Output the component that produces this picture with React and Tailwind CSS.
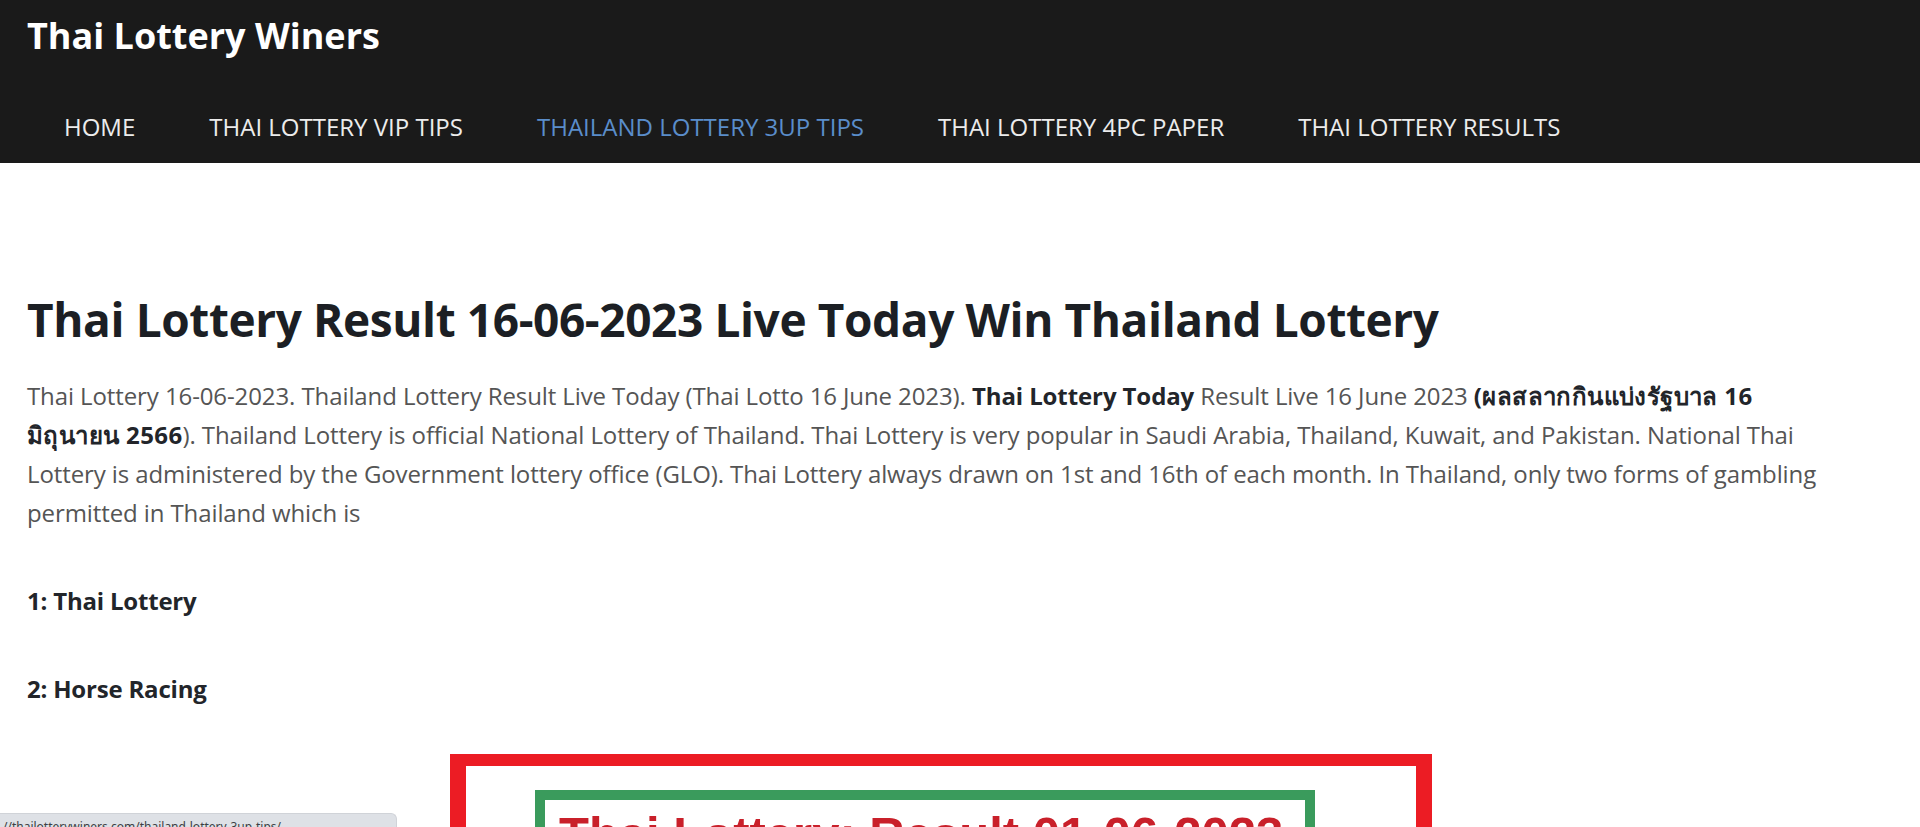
import React from "react";

const navItems = [
  { label: "HOME", active: false },
  { label: "THAI LOTTERY VIP TIPS", active: false },
  { label: "THAILAND LOTTERY 3UP TIPS", active: true },
  { label: "THAI LOTTERY 4PC PAPER", active: false },
  { label: "THAI LOTTERY RESULTS", active: false },
];

export default function App() {
  return (
    <div
      className="min-h-[827px] bg-white"
      style={{ fontFamily: '"Open Sans", "Noto Sans", sans-serif' }}
    >
      <header className="h-[163px] bg-[#1a1a1a] pl-[27px]">
        <div className="pt-[12px] text-[36px] font-bold leading-[48px] text-white">
          Thai Lottery Winers
        </div>
        <nav className="mt-[52px] flex">
          {navItems.map((item, i) => (
            <a
              key={i}
              href="#"
              className={
                "px-[37px] text-[24px] leading-[30px] " +
                (item.active ? "text-[#5a8dca]" : "text-[#ececec]")
              }
            >
              {item.label}
            </a>
          ))}
        </nav>
      </header>

      <main className="w-[1855px] pl-[27px] pt-[128px]">
        <h1 className="text-[46px] font-bold leading-[56px] tracking-[-0.4px] text-[#1c1f24]">
          Thai Lottery Result 16-06-2023 Live Today Win Thailand Lottery
        </h1>
        <p className="mt-[29px] text-[24px] leading-[39px] tracking-[-0.1px] text-[#555555]">
          <span className="block whitespace-nowrap">
            Thai Lottery 16-06-2023. Thailand Lottery Result Live Today (Thai Lotto 16 June 2023).{" "}
            <strong className="font-bold text-[#22252a]">Thai Lottery Today</strong> Result Live 16 June 2023{" "}
            <strong className="font-bold tracking-[0.4px] text-[#22252a]">(ผลสลากกินแบ่งรัฐบาล 16</strong>
          </span>
          <span className="block whitespace-nowrap">
            <strong className="font-bold tracking-[0.4px] text-[#22252a]">มิถุนายน 2566</strong>). Thailand Lottery is official National Lottery of Thailand. Thai Lottery is very popular in Saudi Arabia, Thailand, Kuwait, and Pakistan. National Thai
          </span>
          <span className="block whitespace-nowrap">
            Lottery is administered by the Government lottery office (GLO). Thai Lottery always drawn on 1st and 16th of each month. In Thailand, only two forms of gambling
          </span>
          <span className="block whitespace-nowrap">permitted in Thailand which is</span>
        </p>
        <p className="mt-[49px] text-[24px] font-bold leading-[39px] tracking-[-0.2px] text-[#22252a]">1: Thai Lottery</p>
        <p className="mt-[49px] text-[24px] font-bold leading-[39px] tracking-[-0.2px] text-[#22252a]">2: Horse Racing</p>

        <div className="mt-[46px] flex justify-center">
          <div className="w-[982px] border-x-[16px] border-t-[12px] border-[#ec1c24] bg-white pl-[69px] pt-[24px]">
            <div className="w-[780px] border-x-[10px] border-t-[10px] border-[#3a9b5c] bg-white pl-[14px] pt-[4px]">
              <div
                className="whitespace-nowrap text-[49px] font-bold leading-[60px] text-[#c9202a]"
                style={{ fontFamily: '"Liberation Sans", Arial, sans-serif' }}
              >
                Thai Lottery: Result 01-06-2023
              </div>
            </div>
          </div>
        </div>
      </main>

      <div
        className="fixed left-0 top-[813px] h-[24px] w-[397px] overflow-hidden rounded-tr-[6px] border-t border-r border-[#d0d3d8] bg-[#dee1e6] pl-[3px] pt-[5px] text-[12px] leading-[16px] text-[#3c4043]"
        style={{ fontFamily: '"Noto Sans", sans-serif' }}
      >
        //thailotterywiners.com/thailand-lottery-3up-tips/
      </div>
    </div>
  );
}
